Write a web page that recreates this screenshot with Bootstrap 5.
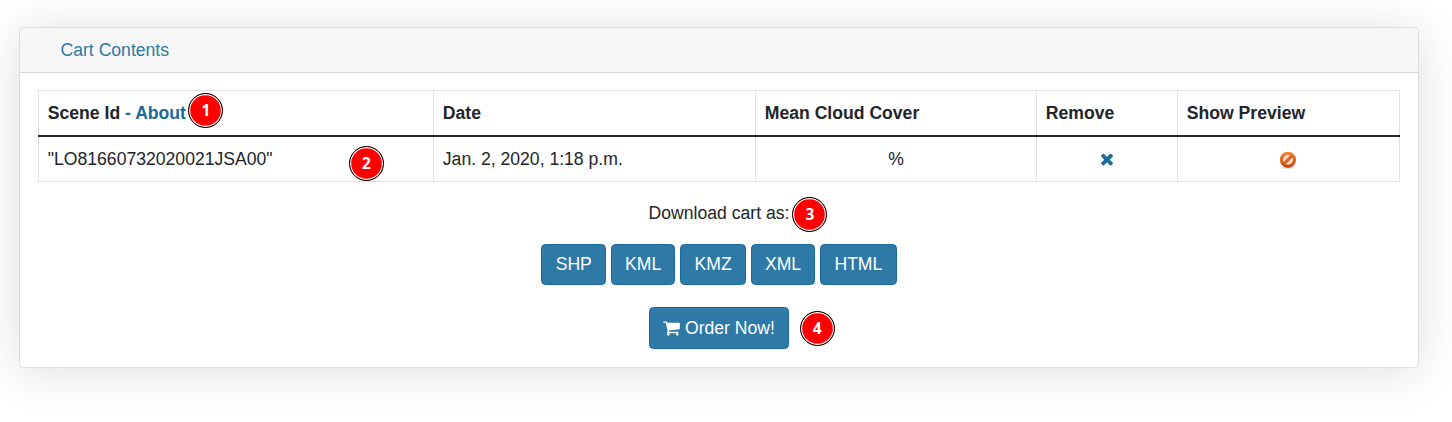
<!DOCTYPE html>
<html lang="en">
<head>
<meta charset="utf-8">
<meta name="viewport" content="width=device-width, initial-scale=1">
<title>Cart Contents</title>
<link href="https://cdn.jsdelivr.net/npm/bootstrap@5.3.0/dist/css/bootstrap.min.css" rel="stylesheet">
<style>
  html { font-size: 17.6px; }
  body { font-family: "Liberation Sans", Arial, sans-serif; color: #212529; background: #fff; min-height: 100vh; display: flow-root; }
  .cart-panel { margin: 27px 33px 0 19px; border: 1px solid #dcdddd; border-radius: 4.4px; box-shadow: 0 4px 48px rgba(20,28,25,.14); }
  .cart-panel > .card-header { height: 45px; padding: 8.8px 40.5px; background: #f7f7f7; border-bottom: 1px solid #d9d9d9; color: #2e79a6; }
  .cart-panel > .card-body { padding: 17px 18px 18px; }
  .cart-table { table-layout: fixed; width: 1362px; border-collapse: collapse; margin-bottom: 17.6px; color: #212529; }
  .cart-table > :not(caption) > * { border-width: 0; }
  .cart-table th, .cart-table td { border: 1px solid #dee2e6 !important; padding: 8.8px; height: 45px; }
  .cart-table thead th { border-bottom: 2px solid #212529 !important; }
  .cart-table a { color: #1a6b9c; text-decoration: none; }
  .cart-btn { --bs-btn-color: #fff; --bs-btn-bg: #2e79a6; --bs-btn-border-color: #1a6b9c; --bs-btn-hover-color: #fff; --bs-btn-hover-bg: #1a6b9c; --bs-btn-border-radius: 4.4px; }
  .downloads { margin-bottom: 22.5px; height: 41px; }
  .order-btn { height: 42px; }
  .cart-icon { position: relative; top: -1px; }
  .step { position: absolute; width: 35px; height: 35px; border-radius: 50%; border: 1.3px solid #000; background: #f00; box-shadow: inset 0 0 0 1.2px #fff; color: #fff; font: bold 15.5px/33px "Noto Sans", "Open Sans", sans-serif; text-align: center; }
  .step-1 { left: calc(100% + 2.4px); top: -9.5px; }
  .step-2 { right: 49px; top: 9.5px; }
  .step-3 { left: calc(100% + 3px); top: -6px; }
  .step-4 { left: calc(100% + 10.5px); top: 4px; }
</style>
</head>
<body>
<main class="card cart-panel">
  <div class="card-header">Cart Contents</div>
  <div class="card-body text-center">
    <table class="table cart-table text-start">
      <colgroup><col style="width:395px"><col style="width:322px"><col style="width:281px"><col style="width:141px"><col style="width:222px"></colgroup>
      <thead>
        <tr>
          <th>Scene Id <a href="#" class="position-relative">- About<span class="step step-1">1</span></a></th>
          <th>Date</th>
          <th>Mean Cloud Cover</th>
          <th>Remove</th>
          <th>Show Preview</th>
        </tr>
      </thead>
      <tbody>
        <tr>
          <td class="position-relative">"LO81660732020021JSA00"<span class="step step-2">2</span></td>
          <td>Jan. 2, 2020, 1:18 p.m.</td>
          <td class="text-center">%</td>
          <td class="text-center"><a href="#" aria-label="Remove"><svg class="cart-icon" width="14" height="18" viewBox="0 0 1408 1792" fill="currentColor" style="top:-1.5px"><path d="M1298 1322q0 40-28 68l-136 136q-28 28-68 28t-68-28l-294-294-294 294q-28 28-68 28t-68-28l-136-136q-28-28-28-68t28-68l294-294-294-294q-28-28-28-68t28-68l136-136q28-28 68-28t68 28l294 294 294-294q28-28 68-28t68 28l136 136q28 28 28 68t-28 68l-294 294 294 294q28 28 28 68z"/></svg></a></td>
          <td class="text-center"><svg width="20" height="18" viewBox="0 0 20 18"><defs><linearGradient id="stop" x2="0" y2="1"><stop stop-color="#ee8238"/><stop offset="1" stop-color="#c84a0c"/></linearGradient></defs><ellipse cx="9" cy="16.8" rx="7" ry=".9" fill="#bbb" opacity=".6"/><circle cx="9" cy="8.8" r="6.5" fill="#f6dccb" stroke="url(#stop)" stroke-width="3.2"/><path d="M4.7 13.1 13.3 4.5" stroke="#d9621e" stroke-width="3"/></svg></td>
        </tr>
      </tbody>
    </table>
    <p class="mb-3"><span class="position-relative">Download cart as:<span class="step step-3">3</span></span></p>
    <div class="downloads">
      <button class="btn cart-btn">SHP</button>
      <button class="btn cart-btn">KML</button>
      <button class="btn cart-btn">KMZ</button>
      <button class="btn cart-btn">XML</button>
      <button class="btn cart-btn">HTML</button>
    </div>
    <div class="position-relative d-inline-block align-top">
      <button class="btn cart-btn order-btn d-block"><svg class="cart-icon" width="17" height="18" viewBox="0 0 1664 1792" fill="currentColor"><path d="M640 1536q0 52-38 90t-90 38-90-38-38-90 38-90 90-38 90 38 38 90zm896 0q0 52-38 90t-90 38-90-38-38-90 38-90 90-38 90 38 38 90zm128-1088v512q0 24-16.500 42.500t-40.500 21.500l-1044 122q13 60 13 70 0 16-24 64h920q26 0 45 19t19 45-19 45-45 19h-1024q-26 0-45-19t-19-45q0-11 8-31.500t16-36 21.500-40 15.500-29.500l-177-823h-204q-26 0-45-19t-19-45 19-45 45-19h256q16 0 28.500 6.500t19.500 15.500 13 24.500 8 26 5.500 29.500 4.500 26h1201q26 0 45 19t19 45z"/></svg> Order Now!</button>
      <span class="step step-4">4</span>
    </div>
  </div>
</main>
<script src="https://cdn.jsdelivr.net/npm/bootstrap@5.3.0/dist/js/bootstrap.bundle.min.js"></script>
</body>
</html>
